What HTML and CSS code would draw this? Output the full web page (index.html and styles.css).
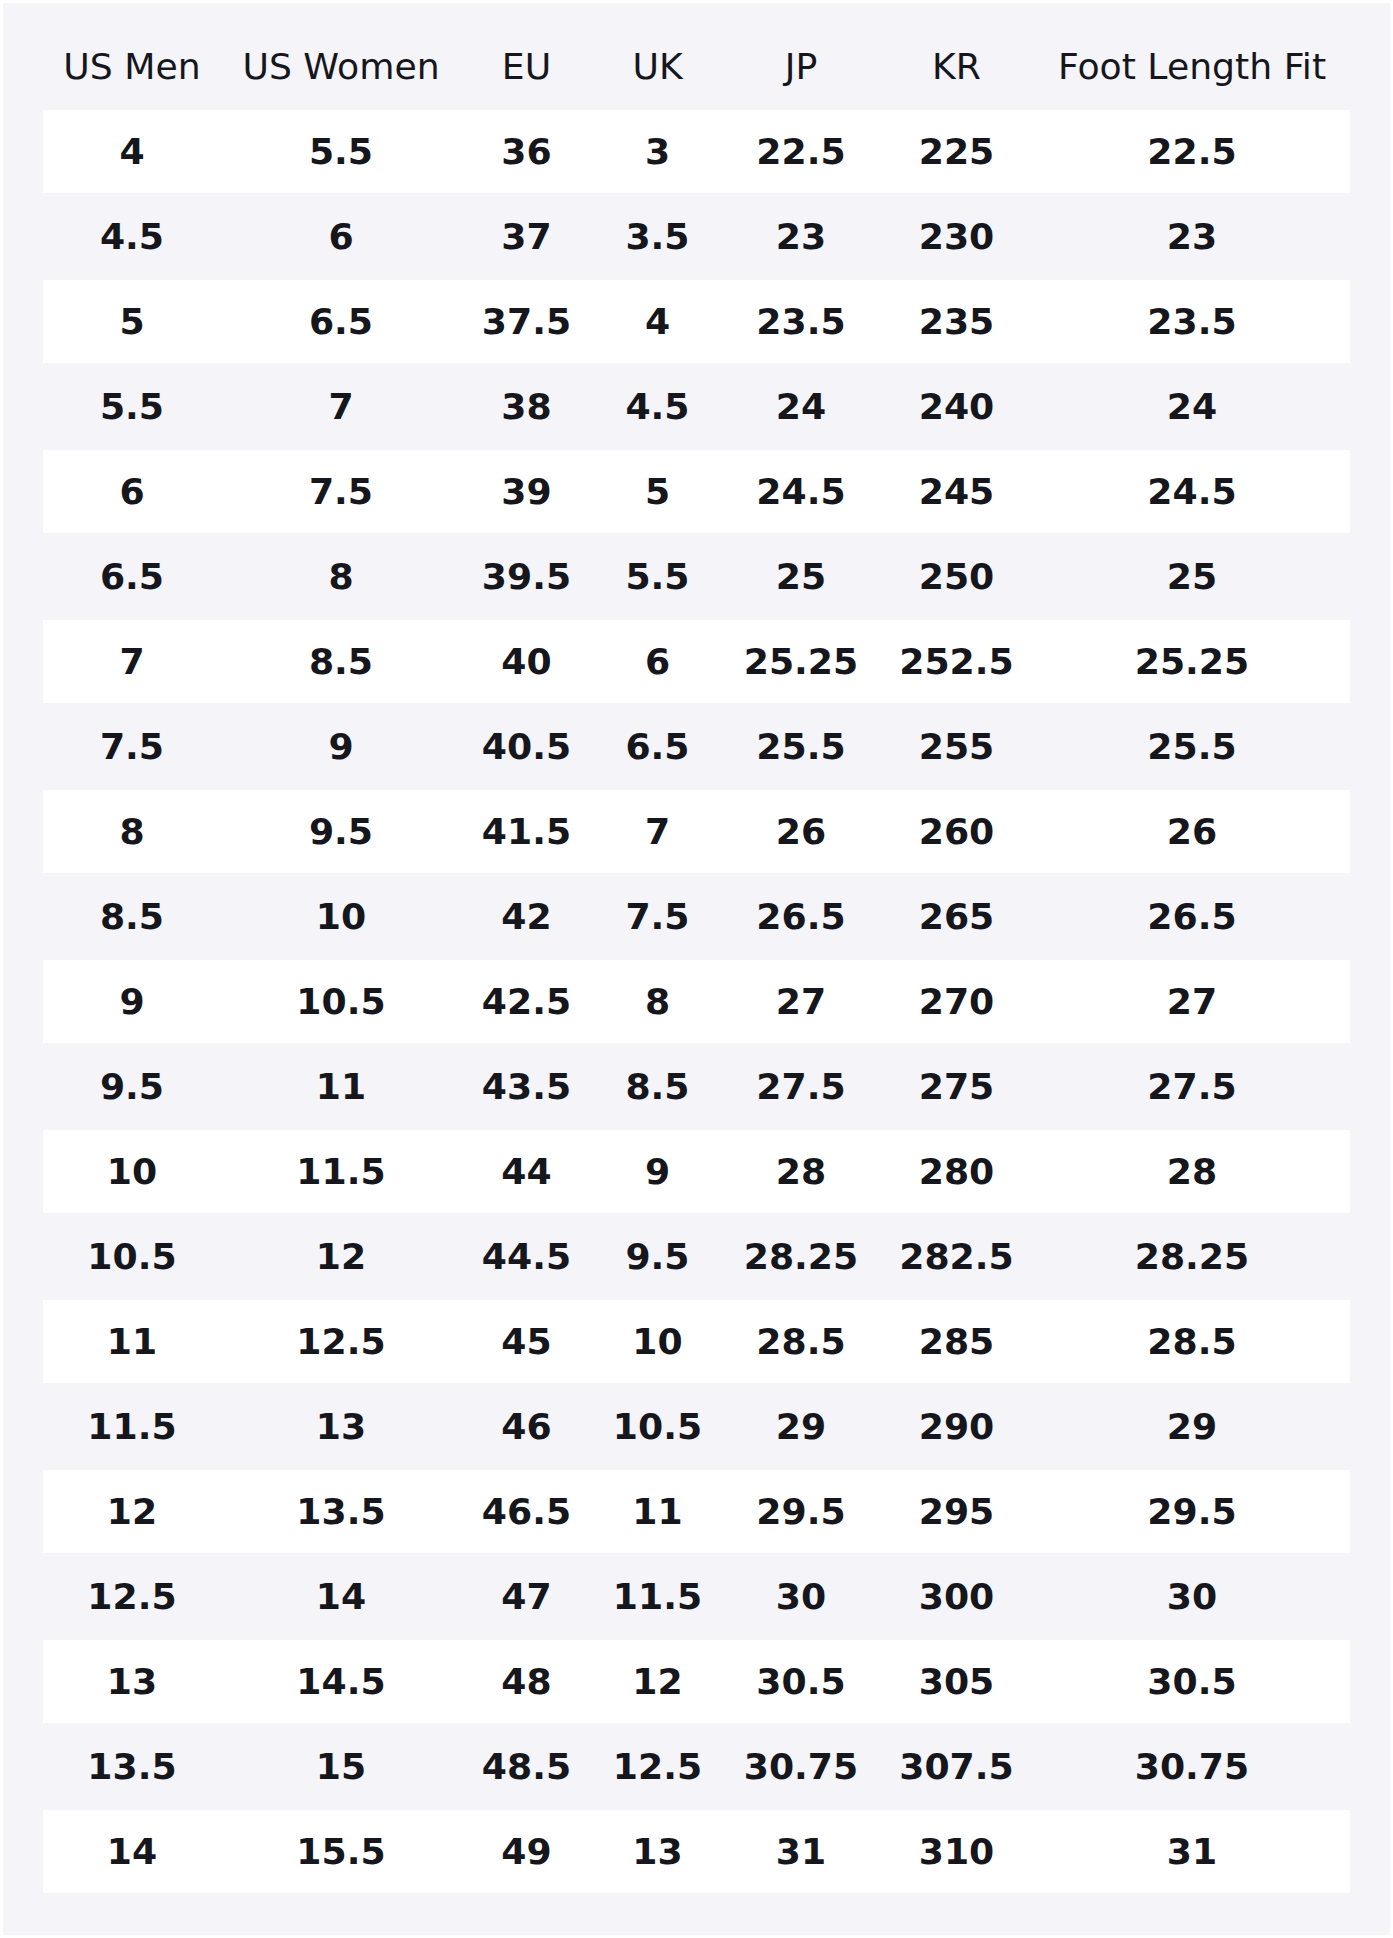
FILE: index.html
```html
<!DOCTYPE html>
<html lang="en">
<head>
<meta charset="utf-8">
<title>Size Chart</title>
<link rel="stylesheet" href="styles.css">
</head>
<body>
<div class="chart">
  <table class="sizes">
    <colgroup>
      <col class="c1"><col class="c2"><col class="c3"><col class="c4"><col class="c5"><col class="c6"><col class="c7">
    </colgroup>
    <thead>
      <tr><th>US Men</th><th>US Women</th><th>EU</th><th>UK</th><th>JP</th><th>KR</th><th>Foot Length Fit</th></tr>
    </thead>
    <tbody>
      <tr class="alt"><td>4</td><td>5.5</td><td>36</td><td>3</td><td>22.5</td><td>225</td><td>22.5</td></tr>
      <tr><td>4.5</td><td>6</td><td>37</td><td>3.5</td><td>23</td><td>230</td><td>23</td></tr>
      <tr class="alt"><td>5</td><td>6.5</td><td>37.5</td><td>4</td><td>23.5</td><td>235</td><td>23.5</td></tr>
      <tr><td>5.5</td><td>7</td><td>38</td><td>4.5</td><td>24</td><td>240</td><td>24</td></tr>
      <tr class="alt"><td>6</td><td>7.5</td><td>39</td><td>5</td><td>24.5</td><td>245</td><td>24.5</td></tr>
      <tr><td>6.5</td><td>8</td><td>39.5</td><td>5.5</td><td>25</td><td>250</td><td>25</td></tr>
      <tr class="alt"><td>7</td><td>8.5</td><td>40</td><td>6</td><td>25.25</td><td>252.5</td><td>25.25</td></tr>
      <tr><td>7.5</td><td>9</td><td>40.5</td><td>6.5</td><td>25.5</td><td>255</td><td>25.5</td></tr>
      <tr class="alt"><td>8</td><td>9.5</td><td>41.5</td><td>7</td><td>26</td><td>260</td><td>26</td></tr>
      <tr><td>8.5</td><td>10</td><td>42</td><td>7.5</td><td>26.5</td><td>265</td><td>26.5</td></tr>
      <tr class="alt"><td>9</td><td>10.5</td><td>42.5</td><td>8</td><td>27</td><td>270</td><td>27</td></tr>
      <tr><td>9.5</td><td>11</td><td>43.5</td><td>8.5</td><td>27.5</td><td>275</td><td>27.5</td></tr>
      <tr class="alt"><td>10</td><td>11.5</td><td>44</td><td>9</td><td>28</td><td>280</td><td>28</td></tr>
      <tr><td>10.5</td><td>12</td><td>44.5</td><td>9.5</td><td>28.25</td><td>282.5</td><td>28.25</td></tr>
      <tr class="alt"><td>11</td><td>12.5</td><td>45</td><td>10</td><td>28.5</td><td>285</td><td>28.5</td></tr>
      <tr><td>11.5</td><td>13</td><td>46</td><td>10.5</td><td>29</td><td>290</td><td>29</td></tr>
      <tr class="alt"><td>12</td><td>13.5</td><td>46.5</td><td>11</td><td>29.5</td><td>295</td><td>29.5</td></tr>
      <tr><td>12.5</td><td>14</td><td>47</td><td>11.5</td><td>30</td><td>300</td><td>30</td></tr>
      <tr class="alt"><td>13</td><td>14.5</td><td>48</td><td>12</td><td>30.5</td><td>305</td><td>30.5</td></tr>
      <tr><td>13.5</td><td>15</td><td>48.5</td><td>12.5</td><td>30.75</td><td>307.5</td><td>30.75</td></tr>
      <tr class="alt"><td>14</td><td>15.5</td><td>49</td><td>13</td><td>31</td><td>310</td><td>31</td></tr>
    </tbody>
  </table>
</div>
</body>
</html>
```
FILE: styles.css
```css
html, body {
  margin: 0;
  padding: 0;
  background: #ffffff;
}

body {
  font-family: "DejaVu Sans", sans-serif;
  color: #16161d;
}

.chart {
  margin: 3px;
  padding: 20px 40px 40px;
  background: #f4f4f9;
}

.sizes {
  width: 100%;
  table-layout: fixed;
  border-collapse: separate;
  border-spacing: 0 2px;
  font-size: 36.2px;
}

.c1 { width: 178px; }
.c2 { width: 240px; }
.c3 { width: 131px; }
.c4 { width: 131px; }
.c5 { width: 156px; }
.c6 { width: 155px; }
.c7 { width: 316px; }

.sizes tr {
  height: 83px;
}

.sizes th,
.sizes td {
  padding: 0;
  text-align: center;
  vertical-align: middle;
  white-space: nowrap;
}

.sizes th {
  font-weight: 400;
}

.sizes td {
  font-weight: 700;
}

.sizes tr.alt td {
  background: #ffffff;
}
```
